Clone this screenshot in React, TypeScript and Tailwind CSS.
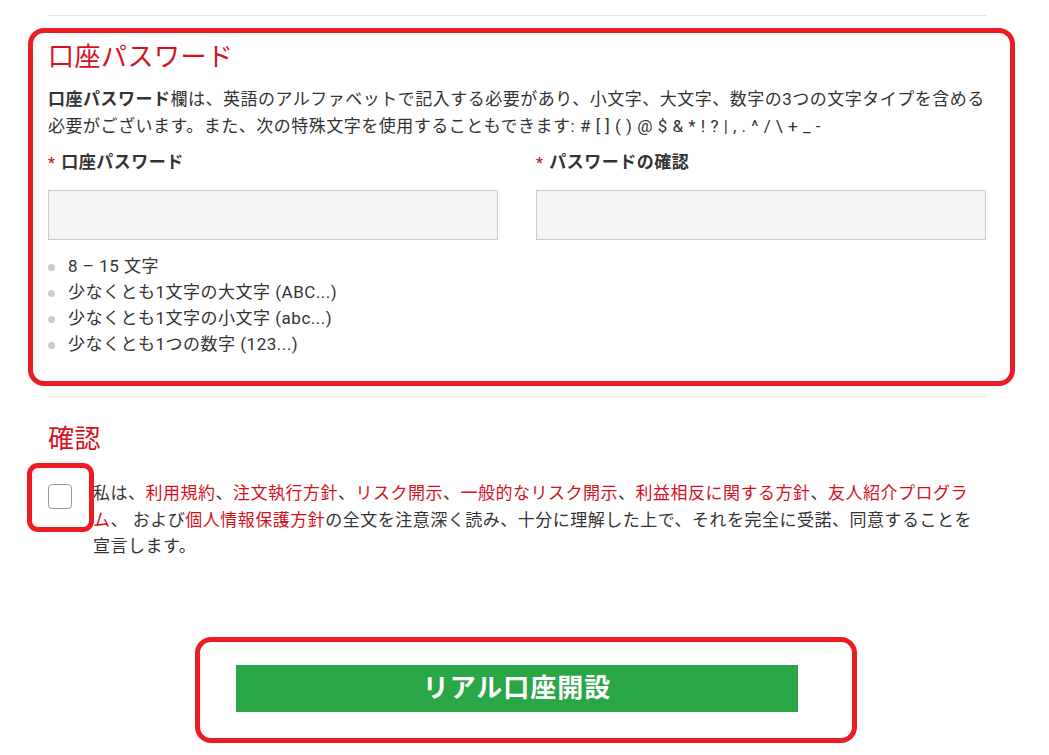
import React from 'react';

const red = 'text-[#d4121e]';

const Field: React.FC<{ label: string }> = ({ label }) => (
    <div className="flex flex-col">
        <label className="flex items-center h-[24px] font-bold text-[17px] text-[#333]">
            <span className={`${red} mr-[6px] text-[15px]`}>*</span>
            {label}
        </label>
        <input type="password" className="mt-[15px] h-[50px] w-full bg-[#f5f5f5] border border-[#cccccc] outline-none" />
    </div>
);

const rules = ['8 – 15 文字', '少なくとも1文字の大文字 (ABC...)', '少なくとも1文字の小文字 (abc...)', '少なくとも1つの数字 (123...)'];

export default function App() {
    return (
        <div
            className="w-[1049px] h-[755px] overflow-hidden bg-white text-[#333] text-[17px] tracking-[0.5px]"
            style={{ fontFamily: 'Roboto, "Noto Sans CJK JP", sans-serif' }}
        >
            <div className="ml-[48px] w-[938px] pt-[15px]">
                <div className="border-t border-[#e3e3e3]" />

                {/* password section, outlined */}
                <div className="mt-[12px] ml-[-20px] mr-[-29px] border-[5px] border-[#ec1c24] rounded-[16px] pl-[15px] pr-[24px] pt-[6px] pb-[23px]">
                    <h2 className={`${red} text-[26px] leading-[36px] font-normal`}>口座パスワード</h2>
                    <p className="mt-[11px] leading-[27px]">
                        <b>口座パスワード</b>欄は、英語のアルファベットで記入する必要があり、小文字、大文字、数字の3つの文字タイプを含める
                        <br />
                        必要がございます。また、次の特殊文字を使用することもできます: # [ ] ( ) @ $ &amp; * ! ? | , . ^ / \ + _ -
                    </p>
                    <div className="mt-[11px] grid grid-cols-2 gap-[38px]">
                        <Field label="口座パスワード" />
                        <Field label="パスワードの確認" />
                    </div>
                    <ul className="mt-[14px]">
                        {rules.map((r) => (
                            <li key={r} className="flex items-center h-[26px]">
                                <span className="w-[7px] h-[7px] rounded-full bg-[#cccccc] mr-[13px]" />
                                {r}
                            </li>
                        ))}
                    </ul>
                </div>

                <div className="mt-[10px] border-t border-[#e3e3e3]" />

                <h2 className={`mt-[24px] ${red} text-[26px] leading-[36px] font-normal`}>確認</h2>
                <div className="mt-[23px] flex items-start">
                    <div className="relative mt-[4px] shrink-0">
                        <span className="block w-[24px] h-[25px] border border-[#999] rounded-[4px] bg-white" />
                        <span className="absolute left-[-21px] top-[-21px] w-[67px] h-[69px] border-[5px] border-[#ec1c24] rounded-[11px]" />
                    </div>
                    <p className="ml-[21px] leading-[26.5px]">
                        私は、<span className={red}>利用規約</span>、<span className={red}>注文執行方針</span>、
                        <span className={red}>リスク開示</span>、<span className={red}>一般的なリスク開示</span>、
                        <span className={red}>利益相反に関する方針</span>、<span className={red}>友人紹介プログラ</span>
                        <br />
                        <span className={red}>ム</span>、 および<span className={red}>個人情報保護方針</span>
                        の全文を注意深く読み、十分に理解した上で、それを完全に受諾、同意することを
                        <br />
                        宣言します。
                    </p>
                </div>

                <div className="mt-[77px] flex">
                    <div className="ml-[147px] border-[5px] border-[#ec1c24] rounded-[16px] pl-[36px] pr-[54px] pt-[23px] pb-[26px]">
                        <button className="w-[562px] h-[47px] bg-[#29a645] text-white font-bold text-[26px] tracking-[1px]">
                            リアル口座開設
                        </button>
                    </div>
                </div>
            </div>
        </div>
    );
}
